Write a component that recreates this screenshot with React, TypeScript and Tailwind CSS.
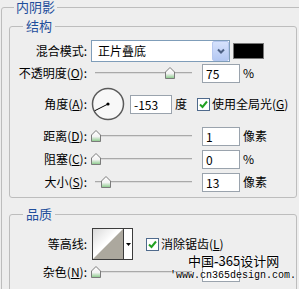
import React from "react";

const Thumb = ({ left }: { left: number }) => (
  <svg className="absolute top-[4px]" style={{ left }} width="10" height="12" viewBox="0 0 10 12">
    <defs>
      <linearGradient id="thumbFill" x1="0" y1="0" x2="0" y2="1">
        <stop offset="0" stopColor="#ffffff" />
        <stop offset="0.55" stopColor="#f3f3f3" />
        <stop offset="1" stopColor="#86c986" />
      </linearGradient>
    </defs>
    <path d="M5 0.5 L9.5 5 V11.5 H0.5 V5 Z" fill="url(#thumbFill)" stroke="#7b7b7b" />
  </svg>
);

const Slider = ({ thumb }: { thumb: number }) => (
  <div className="relative ml-[4px] w-[105px] h-[20px] shrink-0">
    <div className="absolute left-[4px] top-[9px] w-[97px] h-[2px] bg-[#dcdcdc] border-t border-[#a9a9a9]" />
    <Thumb left={thumb} />
  </div>
);

const Field = ({ value, w = "w-[38px]" }: { value: string; w?: string }) => (
  <div className={`${w} h-[19px] shrink-0 bg-white border border-[#9aa3ad] pl-[3px] leading-[17px] text-[12px]`}>
    {value}
  </div>
);

const Check = () => (
  <div className="w-[13px] h-[13px] shrink-0 border border-[#4f6a8c] bg-white flex items-center justify-center">
    <svg width="9" height="9" viewBox="0 0 9 9">
      <path d="M1 4.5 L3.5 7 L8 1.5" fill="none" stroke="#22a122" strokeWidth="2" />
    </svg>
  </div>
);

const Label = ({ children }: { children: React.ReactNode }) => (
  <div className="w-[77px] shrink-0 text-right leading-[14px] whitespace-nowrap">{children}</div>
);

const SliderRow = ({
  label,
  thumb,
  value,
  unit,
  className,
}: {
  label: React.ReactNode;
  thumb: number;
  value: string;
  unit: string;
  className: string;
}) => (
  <div className={`flex items-center h-[20px] ${className}`}>
    <Label>{label}</Label>
    <Slider thumb={thumb} />
    <div className="ml-[6px]">
      <Field value={value} />
    </div>
    <span className="ml-[3px] leading-[14px]">{unit}</span>
  </div>
);

export default function App() {
  return (
    <div className="relative w-[299px] h-[289px] overflow-hidden bg-[#eeeeee] text-[12px] text-black font-['Noto_Sans_CJK_SC',sans-serif]">
      <fieldset className="ml-[1px] w-[320px] border border-[#bdbdbd] rounded-[3px]">
        <legend className="ml-[12px] px-[2px] h-[14px] leading-[14px] text-[13px] text-[#1f4e9c]">内阴影</legend>

        <fieldset className="ml-[7px] mt-[5px] w-[288px] pb-[5px] border border-[#bdbdbd] rounded-[3px]">
          <legend className="ml-[13px] px-[3px] h-[14px] leading-[14px] text-[13px] text-[#1f4e9c]">结构</legend>

          <div className="flex items-center h-[22px] mt-[7px]">
            <Label>混合模式:</Label>
            <div className="ml-[4px] w-[139px] h-[22px] shrink-0 bg-white border border-[#7f9db9] flex items-center">
              <span className="flex-1 pl-[6px] leading-[14px]">正片叠底</span>
              <div className="w-[17px] h-[20px] bg-gradient-to-b from-[#d6e2fc] to-[#b4c8f3] border border-[#b6c8ef] rounded-[2px] flex items-center justify-center">
                <svg width="8" height="6" viewBox="0 0 8 6">
                  <path d="M1 1.5 L4 4.5 L7 1.5" fill="none" stroke="#4d6185" strokeWidth="2" />
                </svg>
              </div>
            </div>
            <div className="ml-[3px] w-[31px] h-[16px] bg-black border border-[#777]" />
          </div>

          <SliderRow
            className="mt-[1px]"
            label={<>不透明度(<u>O</u>):</>}
            thumb={74}
            value="75"
            unit="%"
          />

          <div className="flex items-center h-[34px] mt-[4px]">
            <Label>角度(<u>A</u>):</Label>
            <svg className="ml-[4px] shrink-0" width="34" height="34" viewBox="0 0 34 34">
              <circle cx="17" cy="17" r="15.5" fill="#f8f8f8" stroke="#5a5a5a" strokeWidth="1.5" />
              <line x1="17" y1="17" x2="3.6" y2="23.8" stroke="#000" strokeWidth="1" />
              <circle cx="17" cy="17" r="1.6" fill="#000" />
            </svg>
            <div className="ml-[5px]">
              <Field value="-153" w="w-[42px]" />
            </div>
            <span className="ml-[3px] leading-[14px]">度</span>
            <div className="ml-[10px]">
              <Check />
            </div>
            <span className="ml-[2px] leading-[14px] whitespace-nowrap">使用全局光(<u>G</u>)</span>
          </div>

          <SliderRow className="mt-[5px]" label={<>距离(<u>D</u>):</>} thumb={0} value="1" unit="像素" />
          <SliderRow className="mt-[3px]" label={<>阻塞(<u>C</u>):</>} thumb={0} value="0" unit="%" />
          <SliderRow className="mt-[3px]" label={<>大小(<u>S</u>):</>} thumb={10} value="13" unit="像素" />
        </fieldset>

        <fieldset className="ml-[7px] mt-[9px] w-[288px] h-[100px] border border-[#bdbdbd] rounded-[3px]">
          <legend className="ml-[13px] px-[3px] h-[14px] leading-[14px] text-[13px] text-[#1f4e9c]">品质</legend>

          <div className="flex items-center h-[32px] mt-[7px]">
            <Label>等高线:</Label>
            <div className="ml-[5px] w-[41px] h-[32px] shrink-0 bg-white border border-[#3c3c3c] flex">
              <svg className="block" width="30" height="30" viewBox="0 0 30 30">
                <defs>
                  <linearGradient id="contourFill" x1="0" y1="0" x2="1" y2="1">
                    <stop offset="0" stopColor="#d9d9d9" />
                    <stop offset="0.45" stopColor="#ffffff" />
                  </linearGradient>
                </defs>
                <rect width="30" height="30" fill="url(#contourFill)" />
                <path d="M0 30 L30 0 L30 30 Z" fill="#aca89e" />
              </svg>
              <div className="w-[9px] border-l border-[#3c3c3c] flex items-center justify-center">
                <svg width="5" height="3" viewBox="0 0 5 3">
                  <path d="M0 0 H5 L2.5 3 Z" fill="#000" />
                </svg>
              </div>
            </div>
            <div className="ml-[13px]">
              <Check />
            </div>
            <span className="ml-[2px] leading-[14px] whitespace-nowrap">消除锯齿(<u>L</u>)</span>
          </div>

          <SliderRow className="mt-[2px]" label={<>杂色(<u>N</u>):</>} thumb={0} value="" unit="" />
        </fieldset>
      </fieldset>

      <div className="absolute left-[188px] top-[254px] text-[13px] leading-[14px] whitespace-nowrap [text-shadow:0_0_2px_#fff,0_0_2px_#fff]">
        中国-365设计网
      </div>
      <div className="absolute left-[170px] top-[270px] text-[10px] leading-[12px] whitespace-nowrap font-['Liberation_Mono',monospace] [text-shadow:0_0_2px_#fff,0_0_2px_#fff]">
        'www.cn365design.com.
      </div>
    </div>
  );
}
